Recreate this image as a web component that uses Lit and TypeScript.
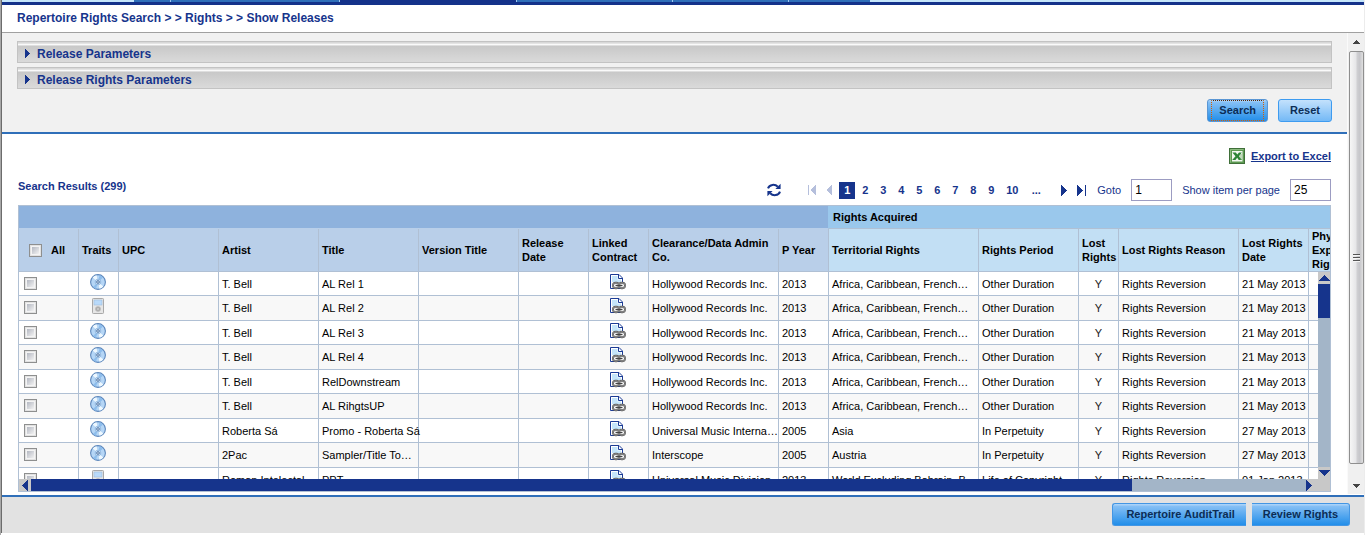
import { LitElement, html, css, svg } from "lit";
import { customElement } from "lit/decorators.js";
import { classMap } from "lit/directives/class-map.js";

interface Release {
  trait: "disc" | "player";
  artist: string;
  title: string;
  company: string;
  year: string;
  territory: string;
  period: string;
  date: string;
}

const AFRICA = "Africa, Caribbean, French…";
const bell = (title: string, trait: "disc" | "player" = "disc"): Release => ({
  trait,
  artist: "T. Bell",
  title,
  company: "Hollywood Records Inc.",
  year: "2013",
  territory: AFRICA,
  period: "Other Duration",
  date: "21 May 2013",
});

const RELEASES: Release[] = [
  bell("AL Rel 1"),
  bell("AL Rel 2", "player"),
  bell("AL Rel 3"),
  bell("AL Rel 4"),
  bell("RelDownstream"),
  bell("AL RihgtsUP"),
  { trait: "disc", artist: "Roberta Sá", title: "Promo - Roberta Sá", company: "Universal Music Interna…", year: "2005", territory: "Asia", period: "In Perpetuity", date: "27 May 2013" },
  { trait: "disc", artist: "2Pac", title: "Sampler/Title To…", company: "Interscope", year: "2005", territory: "Austria", period: "In Perpetuity", date: "27 May 2013" },
  { trait: "player", artist: "Roman Intelectal", title: "PPT", company: "Universal Music Division…", year: "2013", territory: "World Excluding Bahrain, B…", period: "Life of Copyright", date: "01 Jan 2013" },
];

const discIcon = html`<svg class="icon" width="16" height="16" viewBox="0 0 16 16" role="img" aria-label="Disc">
  <circle cx="8" cy="8" r="7.4" fill="#b5d6f6" stroke="#5c86bb" stroke-width="1.1" />
  <path d="M8 8 L2.6 3.4 A7 7 0 0 1 6.6 1.2 Z M8 8 L13.4 12.6 A7 7 0 0 1 9.4 14.8 Z" fill="#eef8ff" />
  <path d="M8 8 L9.5 1.3 A7 7 0 0 1 13 3.4 Z M8 8 L3 13 A7 7 0 0 0 6 14.7 Z" fill="#8dbdec" />
  <circle cx="8" cy="8" r="2.8" fill="#d8ebfc" stroke="#86add8" stroke-width="0.8" />
  <circle cx="8" cy="8" r="1.3" fill="#fff" stroke="#3f6aa0" stroke-width="1" />
</svg>`;

const playerIcon = html`<svg class="icon" width="16" height="16" viewBox="0 0 16 16" role="img" aria-label="Player">
  <rect x="2.5" y="0.5" width="11" height="15" rx="0.8" fill="#e6e6e6" stroke="#a9a9a9" />
  <rect x="4" y="2" width="8" height="5" fill="#b9dafa" stroke="#9dbcdc" stroke-width="0.6" />
  <circle cx="8" cy="11" r="2.8" fill="#b4b4b4" />
  <circle cx="8" cy="11" r="1.2" fill="#eee" stroke="#888" stroke-width="0.5" />
</svg>`;

const contractIcon = html`<svg class="icon" width="16" height="16" viewBox="0 0 16 16" role="img" aria-label="Linked contract">
  <path d="M0.5 0.5 H9 L12.5 4 V14.5 H0.5 Z" fill="#fff" stroke="#1c3c96" />
  <path d="M2 2 H7.5 V5.5 H11 V8 H2 Z" fill="#c4e5fa" />
  <path d="M8.5 1 V4.5 H12" fill="none" stroke="#1c3c96" />
  <g fill="#fff">
    <rect x="3" y="8.8" width="6" height="5.4" rx="2.6" stroke="#555" stroke-width="1.9" />
    <rect x="9" y="8.8" width="6" height="5.4" rx="2.6" stroke="#555" stroke-width="1.9" />
    <rect x="3" y="8.8" width="6" height="5.4" rx="2.6" fill="none" stroke="#c9c9c9" stroke-width="0.5" />
    <rect x="9" y="8.8" width="6" height="5.4" rx="2.6" fill="none" stroke="#c9c9c9" stroke-width="0.5" />
    <path d="M5.5 11.5 H12.5" stroke="#444" stroke-width="1.4" />
  </g>
</svg>`;

const excelIcon = html`<svg width="16" height="16" viewBox="0 0 16 16" aria-hidden="true">
  <rect x="0.5" y="0.5" width="15" height="15" fill="#5d9a52" stroke="#3f6f39" />
  <path d="M1.5 14.5 V1.5 H14.5" fill="none" stroke="#8cbc80" />
  <rect x="3" y="3" width="10.5" height="10.5" fill="#f3f8f1" />
  <path d="M3.4 4.5 H6.8 L8.3 6.6 L10 4.5 H12.8 L9.9 8.2 L13 12 H9.7 L8.2 9.8 L6.4 12 H3.2 L6.5 8.2 Z" fill="#2c8436" />
  <path d="M10.5 9 H13 M11 11 H13 M10.6 7 H13" stroke="#73ab6b" stroke-width="0.8" />
</svg>`;

const refreshIcon = html`<svg width="14" height="14" viewBox="0 0 14 14" aria-hidden="true">
  <g fill="none" stroke="#16348c" stroke-width="2">
    <path d="M1 5.4 C2.4 1.2 8 0.8 10.8 3.8" />
    <path d="M13 8.6 C11.6 12.8 6 13.2 3.2 10.2" />
  </g>
  <path d="M13.6 0.8 V6 H8.4 Z M0.4 13.2 V8 H5.6 Z" fill="#16348c" />
</svg>`;

const triangle = (points: string, w: number, h: number, bar?: number) => html`<svg
  width=${w} height=${h} viewBox="0 0 ${w} ${h}" aria-hidden="true" fill="currentColor" shape-rendering="crispEdges">
  <polygon points=${points} />${bar === undefined ? "" : svg`<rect x=${bar} y="0" width="1" height=${h} />`}
</svg>`;

@customElement("app-root")
export class AppRoot extends LitElement {
  static styles = css`
    * { box-sizing: border-box; }
    :host {
      display: flex;
      flex-direction: column;
      height: 100vh;
      font: 11px/14px "Liberation Sans", Arial, sans-serif;
      color: #000;
      background: #fff;
      border-left: 1px solid #a8a8a8;
      border-right: 1px solid #ececec;
      border-bottom: 1px solid #8e8e8e;
    }
    .frame {
      flex: 1;
      min-height: 0;
      display: flex;
      flex-direction: column;
      border-left: 1px solid #6c6c6c;
      margin-bottom: 2px;
    }
    svg { display: block; }
    button, input { font: inherit; margin: 0; }
    .tabs {
      display: flex;
      flex: none;
      height: 5px;
      background: #c5e6fb;
      border-bottom: 3px solid #14328a;
    }
    .tab { background: #2f6fb9; border-right: 1px solid #9fc6ee; }
    .lead { width: 132px; }
    .t1 { width: 37px; }
    .t2 { width: 169px; }
    .t3 { width: 177px; background: #14328a; }
    .t4 { width: 156px; }
    .t5 { width: 116px; }
    .t6 { width: 81px; border-right: 0; }
    .crumbs {
      flex: none;
      height: 28px;
      padding: 6px 15px 0;
      border-bottom: 1px solid #a0a0a0;
      font-size: 12px;
      font-weight: bold;
      color: #16348c;
    }
    .body { flex: 1; min-height: 0; display: flex; }
    .main { flex: 1; min-width: 0; display: flex; flex-direction: column; }
    .params {
      flex: none;
      background: #f1f1f1;
      border-bottom: 2px solid #2f6fb9;
      padding: 8px 15px 10px;
    }
    .bar {
      display: flex;
      align-items: center;
      gap: 7px;
      width: 100%;
      height: 22px;
      margin-bottom: 4px;
      padding: 3px 7px 0;
      border: 1px solid #c3c3c3;
      background: linear-gradient(#d8d8d8 0 1px, #e4e4e4 1px 2px, #fafafa 2px 3px, #dedede 3px 4px, #c8c8c8 4px, #dadada);
      font-size: 12px;
      font-weight: bold;
      color: #16348c;
      text-align: left;
    }
    .actions { display: flex; justify-content: flex-end; gap: 10px; padding-top: 6px; }
    .btn {
      height: 23px;
      padding: 0 11px 1px;
      border: 1px solid #3d9bf0;
      border-radius: 3px;
      background: linear-gradient(#c3e1fc, #74b9f6);
      color: #0c2d55;
      font-weight: bold;
      white-space: nowrap;
    }
    .strong { background: linear-gradient(#a9d2f8 0 1px, #86c0f5 2px, #228ee9); border-color: #4396e4; }
    .focused { position: relative; border-color: #5a96d4; }
    .focused::after {
      content: "";
      position: absolute;
      inset: 0 3px 0 3px;
      border: 1px dotted #d85f00;
      border-top-color: #51260a;
    }
    .results {
      flex: 1;
      min-height: 0;
      display: flex;
      flex-direction: column;
      padding: 14px 16px 3px;
    }
    .export { display: flex; justify-content: flex-end; align-items: center; gap: 6px; height: 16px; }
    .export a { color: #16348c; font-weight: bold; }
    .tools {
      display: flex;
      align-items: center;
      justify-content: space-between;
      height: 24px;
      margin: 14px 0 3px;
      color: #16348c;
    }
    .count { align-self: flex-start; font-weight: bold; font-size: 11px; margin: 1px 0 0; }
    .pager { display: flex; align-items: center; }
    .pager button { border: 0; padding: 0; background: none; color: #16348c; font-weight: bold; }
    .pager .off { color: #b5bfdc; }
    .refresh { margin-right: 27px; }
    .pages { display: flex; gap: 2px; margin: 0 14px 0 7px; }
    .pages button { width: 16px; height: 17px; text-align: center; }
    .pages .wide { width: 22px; }
    .pages .current { background: #16348c; color: #fff; }
    .prev { margin-left: 10px; }
    .last { margin-left: 10px; }
    .field { display: flex; align-items: center; gap: 10px; margin-left: 11px; }
    .field + .field { margin-left: 10px; }
    .field input {
      width: 41px;
      height: 22px;
      padding: 0 3px;
      border: 1px solid #9c9cc2;
      background: #fff;
      font-size: 12px;
    }
    .grid {
      position: relative;
      flex: 1;
      min-height: 0;
      overflow: hidden;
      border: 1px solid #b0c0d4;
    }
    table { width: 1370px; table-layout: fixed; border-collapse: separate; border-spacing: 0; }
    th, td {
      padding: 0 0 0 3px;
      border-left: 1px solid #b0c0d4;
      border-bottom: 1px solid #b0c0d4;
      text-align: left;
      white-space: nowrap;
    }
    th:first-child, td:first-child { border-left: 0; }
    .group th { height: 23px; background: #9ac8ec; }
    .group .blank { background: #8eb2dd; border-bottom-color: #b9cfe9; }
    .group .acquired { border-left-color: #9ac8ec; padding-left: 4px; }
    .heads th { height: 43px; background: #c2dff4; }
    .heads .core { background: #b9cfe9; }
    .row td { height: 24px; }
    .row:nth-child(even) td { height: 25px; background: #f8f8f8; }
    .row .mid { padding: 0; text-align: center; color: #222; }
    .row .pic { padding: 2px 2px 0 0; vertical-align: top; }
    .row .pic .icon { margin: 0 auto; }
    .row .pick { padding: 5px 0 0 5px; vertical-align: top; }
    .all { display: flex; align-items: center; gap: 9px; padding-left: 7px; }
    .check {
      appearance: none;
      display: block;
      width: 13px;
      height: 13px;
      border: 1px solid #8e8f8f;
      background: linear-gradient(135deg, #b4b8c2, #f2f2f2) content-box, #f4f4f4;
      padding: 2px;
      box-shadow: inset 0 0 0 1px #e2e2e2;
    }
    .vbar, .hbar { position: absolute; display: flex; background: #a3b5c8; color: #16348c; }
    .vbar { right: 0; top: 66px; bottom: 12px; width: 12px; flex-direction: column; }
    .hbar { left: 0; right: 0; bottom: 0; height: 12px; }
    .cap { flex: none; display: flex; align-items: center; justify-content: center; width: 12px; height: 12px; background: #c8c8c8; }
    .thumb { background: #16348c; }
    .vbar .thumb { height: 34px; }
    .hbar .thumb { width: 84%; }
    .push { margin-top: auto; }
    .end { margin-left: auto; justify-content: flex-start; }
    .winbar {
      flex: none;
      display: flex;
      flex-direction: column;
      align-items: center;
      width: 17px;
      margin-bottom: 1px;
      background: #f0f0f0;
      border-left: 1px solid #fafafa;
      color: #444;
    }
    .winbar .step { display: flex; height: 18px; align-items: center; }
    .winbar .step:last-child { height: 30px; padding-bottom: 6px; align-items: flex-end; }
    .slider {
      flex: 1;
      display: flex;
      flex-direction: column;
      justify-content: center;
      align-items: center;
      gap: 1px;
      width: 15px;
      border: 1px solid #8f8f8f;
      border-radius: 2px;
      background: linear-gradient(90deg, #f6f6f6, #e6e6e8 45%, #cfcfd2 55%, #c6c6ca 75%, #e0e0e0);
    }
    .grip { width: 7px; height: 2px; background: #555; border-bottom: 1px solid #f5f5f5; }
    .foot {
      flex: none;
      display: flex;
      justify-content: flex-end;
      gap: 6px;
      height: 38px;
      padding: 6px 14px 0;
      border-top: 2px solid #2f6fb9;
      background: #e2e2e2;
    }
    .foot .btn:first-child { border-right: 0; border-radius: 3px 0 0 3px; padding-left: 13px; }
    .foot .btn:last-child { border-left: 0; border-radius: 0 3px 3px 0; }
  `;

  private widths = [59, 40, 100, 100, 100, 100, 70, 60, 130, 50, 150, 100, 40, 120, 70, 81];

  private renderRow(r: Release) {
    return html`<tr class="row">
      <td class="pick"><input class="check" type="checkbox" aria-label="Select ${r.title}" /></td>
      <td class="pic">${r.trait === "disc" ? discIcon : playerIcon}</td>
      <td></td>
      <td>${r.artist}</td>
      <td>${r.title}</td>
      <td></td>
      <td></td>
      <td class="pic">${contractIcon}</td>
      <td>${r.company}</td>
      <td>${r.year}</td>
      <td>${r.territory}</td>
      <td>${r.period}</td>
      <td class="mid">Y</td>
      <td>Rights Reversion</td>
      <td>${r.date}</td>
      <td></td>
    </tr>`;
  }

  render() {
    const pages = ["1", "2", "3", "4", "5", "6", "7", "8", "9", "10", "..."];
    return html`
      <div class="frame">
        <div class="tabs">
          <div class="lead"></div>
          ${[1, 2, 3, 4, 5, 6].map((n) => html`<div class="tab t${n}"></div>`)}
        </div>
        <nav class="crumbs">Repertoire Rights Search &gt; &gt; Rights &gt; &gt; Show Releases</nav>
        <div class="body">
          <main class="main">
            <section class="params">
              ${["Release Parameters", "Release Rights Parameters"].map(
                (name) => html`<button class="bar" aria-expanded="false">${triangle("0,0 5,4.5 0,9", 5, 9)}${name}</button>`
              )}
              <div class="actions">
                <button class="btn strong focused">Search</button>
                <button class="btn">Reset</button>
              </div>
            </section>
            <section class="results">
              <div class="export">${excelIcon}<a href="#">Export to Excel</a></div>
              <div class="tools">
                <h2 class="count">Search Results (299)</h2>
                <div class="pager">
                  <button class="refresh" aria-label="Refresh">${refreshIcon}</button>
                  <button class="off" aria-label="First page">${triangle("8,0 2,5 8,10", 8, 10, 0)}</button>
                  <button class="off prev" aria-label="Previous page">${triangle("6,0 0,5 6,10", 6, 10)}</button>
                  <div class="pages">
                    ${pages.map((p) => html`<button class=${classMap({ current: p === "1", wide: p.length > 1 })}>${p}</button>`)}
                  </div>
                  <button aria-label="Next page">${triangle("0,0 6,5.5 0,11", 6, 11)}</button>
                  <button class="last" aria-label="Last page">${triangle("0,0 6,5.5 0,11", 9, 11, 8)}</button>
                  <label class="field">Goto <input type="text" value="1" /></label>
                  <label class="field">Show item per page <input type="text" value="25" /></label>
                </div>
              </div>
              <div class="grid">
                <table>
                  <colgroup>${this.widths.map((w) => html`<col style="width:${w}px" />`)}</colgroup>
                  <thead>
                    <tr class="group">
                      <th class="blank" colspan="10"></th>
                      <th class="acquired" colspan="6">Rights Acquired</th>
                    </tr>
                    <tr class="heads">
                      <th class="core"><label class="all"><input class="check" type="checkbox" />All</label></th>
                      <th class="core">Traits</th>
                      <th class="core">UPC</th>
                      <th class="core">Artist</th>
                      <th class="core">Title</th>
                      <th class="core">Version Title</th>
                      <th class="core">Release<br />Date</th>
                      <th class="core">Linked<br />Contract</th>
                      <th class="core">Clearance/Data Admin<br />Co.</th>
                      <th class="core">P Year</th>
                      <th>Territorial Rights</th>
                      <th>Rights Period</th>
                      <th>Lost<br />Rights</th>
                      <th>Lost Rights Reason</th>
                      <th>Lost Rights<br />Date</th>
                      <th>Physical<br />Exploitation<br />Rights</th>
                    </tr>
                  </thead>
                  <tbody>${RELEASES.map((r) => this.renderRow(r))}</tbody>
                </table>
                <div class="vbar">
                  <span class="cap">${triangle("0,6 5.5,0 11,6", 11, 6)}</span>
                  <span class="thumb"></span>
                  <span class="cap push">${triangle("0,0 5.5,6 11,0", 11, 6)}</span>
                </div>
                <div class="hbar">
                  <span class="cap">${triangle("6,0 0,5.5 6,11", 6, 11)}</span>
                  <span class="thumb"></span>
                  <span class="cap end">${triangle("0,0 6,5.5 0,11", 6, 11)}</span>
                  <span class="cap"></span>
                </div>
              </div>
            </section>
          </main>
          <div class="winbar">
            <span class="step">${triangle("0,4 3.5,0 7,4", 7, 4)}</span>
            <span class="slider"><i class="grip"></i><i class="grip"></i><i class="grip"></i></span>
            <span class="step">${triangle("0,0 3.5,4 7,0", 7, 4)}</span>
          </div>
        </div>
        <footer class="foot">
          <button class="btn strong">Repertoire AuditTrail</button>
          <button class="btn strong">Review Rights</button>
        </footer>
      </div>
    `;
  }
}
